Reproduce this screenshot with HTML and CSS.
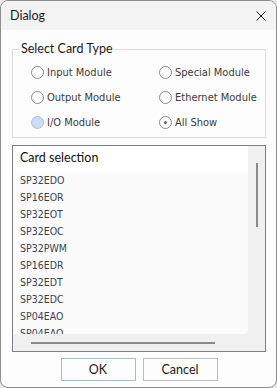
FILE: index.html
```html
<!DOCTYPE html>
<html>
<head>
<meta charset="utf-8">
<link rel="stylesheet" href="styles.css">
</head>
<body>
<div class="window">
  <div class="titlebar">
    <span class="title">Dialog</span>
    <svg class="close" width="10" height="10" viewBox="0 0 10 10"><path d="M0.5 0.5 L9.5 9.5 M9.5 0.5 L0.5 9.5" stroke="#1a1a1a" stroke-width="1" fill="none"/></svg>
  </div>
  <div class="content">
    <fieldset class="group">
      <legend class="legend">Select Card Type</legend>
      <div class="radios">
        <label class="radio"><span class="circle"></span><span class="rlabel">Input Module</span></label>
        <label class="radio"><span class="circle"></span><span class="rlabel">Special Module</span></label>
        <label class="radio"><span class="circle"></span><span class="rlabel">Output Module</span></label>
        <label class="radio"><span class="circle"></span><span class="rlabel">Ethernet Module</span></label>
        <label class="radio"><span class="circle hover"></span><span class="rlabel">I/O Module</span></label>
        <label class="radio"><span class="circle checked"></span><span class="rlabel">All Show</span></label>
      </div>
    </fieldset>
    <div class="listbox">
      <div class="listview">
        <div class="listhead">Card selection</div>
        <div class="items">
          <div class="item">SP32EDO</div>
          <div class="item">SP16EOR</div>
          <div class="item">SP32EOT</div>
          <div class="item">SP32EOC</div>
          <div class="item">SP32PWM</div>
          <div class="item">SP16EDR</div>
          <div class="item">SP32EDT</div>
          <div class="item">SP32EDC</div>
          <div class="item">SP04EAO</div>
          <div class="item">SP04EAO</div>
        </div>
      </div>
      <div class="vscroll"><div class="vthumb"></div></div>
      <div class="hscroll"><div class="hthumb"></div></div>
      <div class="corner"></div>
    </div>
    <div class="buttons">
      <button class="btn default">OK</button>
      <button class="btn">Cancel</button>
    </div>
  </div>
</div>
</body>
</html>
```
FILE: styles.css
```css
html, body {
  margin: 0;
  padding: 0;
  background: #e9e9e9;
}
.window {
  width: 277px;
  height: 388px;
  box-sizing: border-box;
  border: 1px solid #8d8d8d;
  border-radius: 8px;
  overflow: hidden;
  background: #fdfdfd;
  display: flex;
  flex-direction: column;
  font-family: Lato, "Noto Sans", sans-serif;
  font-size: 12px;
  color: #1a1a1a;
}
.titlebar {
  height: 29px;
  flex: none;
  background: #f3f3f3;
  display: flex;
  align-items: center;
  justify-content: space-between;
  padding: 0 10px 0 9px;
}
.title {
  font-size: 12.5px;
  color: #1a1a1a;
}
.close {
  display: block;
  margin-top: 1px;
}
.content {
  flex: 1;
  padding: 12px 10px 0 11px;
  display: flex;
  flex-direction: column;
}
.group {
  margin: 0;
  padding: 4px 0 0 18px;
  border: 1px solid #dcdcdc;
  height: 96px;
  box-sizing: border-box;
  min-width: 0;
  flex: none;
}
.legend {
  padding: 0 1px;
  margin-left: -11px;
  font-size: 12.5px;
  line-height: 14px;
  color: #1a1a1a;
}
.radios {
  display: grid;
  grid-template-columns: 128px 1fr;
  grid-auto-rows: 25px;
}
.radio {
  display: flex;
  align-items: center;
  font-family: "DejaVu Sans Condensed", "Liberation Sans", sans-serif;
  font-size: 11px;
  color: #3a3a3a;
}
.circle {
  width: 11px;
  height: 11px;
  border: 1px solid #8c8c8c;
  border-radius: 50%;
  background: #fff;
  margin-right: 3px;
  position: relative;
  flex: none;
}
.circle.hover {
  background: #cddcf2;
  border-color: #a9bfe2;
}
.circle.checked::after {
  content: "";
  position: absolute;
  left: 4px;
  top: 4px;
  width: 3px;
  height: 3px;
  border-radius: 50%;
  background: #666;
}
.listbox {
  margin-top: 7px;
  height: 207px;
  flex: none;
  box-sizing: border-box;
  border: 1px solid #7f7d8a;
  background: #f0f0f0;
  display: grid;
  grid-template-columns: 1fr 17px;
  grid-template-rows: 1fr 17px;
}
.listview {
  background: #fbfbfb;
  border-bottom-right-radius: 4px;
  overflow: hidden;
}
.listhead {
  background: #fff;
  height: 26px;
  line-height: 24px;
  padding-left: 7px;
  font-size: 12.5px;
  color: #111;
}
.items {
  padding-left: 7px;
}
.item {
  height: 17px;
  line-height: 17px;
  font-family: "DejaVu Sans Condensed", "Liberation Sans", sans-serif;
  font-size: 10.5px;
  color: #3b3f52;
}
.vscroll {
  display: flex;
  justify-content: center;
  padding-top: 17px;
}
.vthumb {
  width: 2px;
  height: 64px;
  background: #8a8a8a;
  margin-left: 1px;
}
.hscroll {
  display: flex;
  align-items: center;
  padding-left: 18px;
}
.hthumb {
  height: 2px;
  width: 184px;
  background: #8a8a8a;
  margin-top: 1px;
}
.buttons {
  display: flex;
  justify-content: center;
  gap: 7px;
  margin-top: 6px;
}
.btn {
  width: 75px;
  height: 23px;
  box-sizing: border-box;
  border: 1px solid #bdbdbd;
  background: #fdfdfd;
  font-family: Lato, "Noto Sans", sans-serif;
  font-size: 12.5px;
  color: #1a1a1a;
  padding: 0;
  margin: 0;
}
.btn.default {
  border-color: #9dbde6;
}
```
